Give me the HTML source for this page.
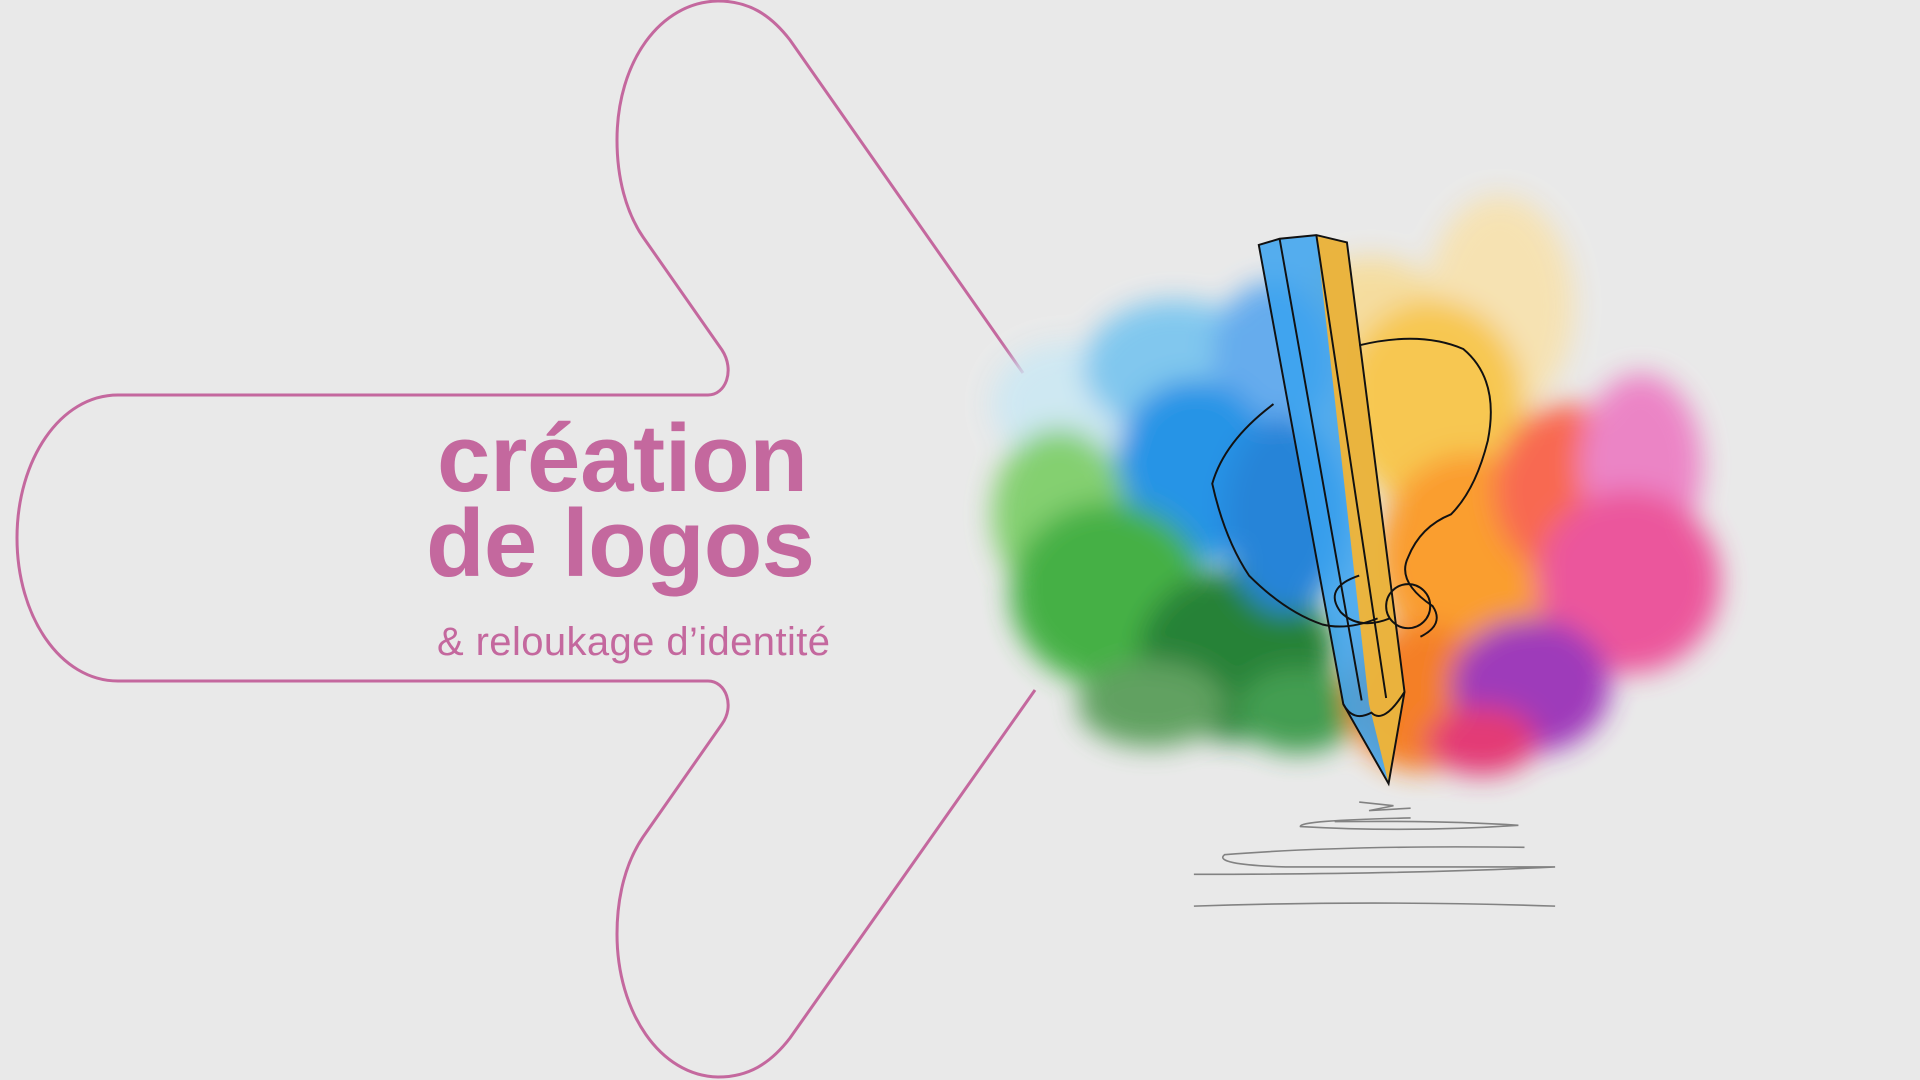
<!DOCTYPE html>
<html><head><meta charset="utf-8"><style>
html,body{margin:0;padding:0;background:#e9e9e9;overflow:hidden}
svg{display:block}
</style></head><body>
<svg width="1920" height="1080" viewBox="0 0 1920 1080" xmlns="http://www.w3.org/2000/svg">
<defs>
<filter id="b" x="-30%" y="-30%" width="160%" height="160%"><feGaussianBlur stdDeviation="11"/></filter>
</defs>
<rect width="1920" height="1080" fill="#e9e9e9"/>
<path d="M1023,373 L790,40 C770,14 748,1 718,1 C660,2 617,62 617,140 C617,178 626,212 643,237 L722,350 C735,370 726,395 708,395 L118,395 C60,395 17,460 17,538 C17,616 60,681 118,681 L708,681 C726,681 735,706 722,724 L643,837 C626,862 617,896 617,934 C617,1012 660,1076 718,1077 C748,1077 770,1064 790,1038 L1035,690" fill="none" stroke="#c4689e" stroke-width="3"/>
<g font-family="'Liberation Sans',sans-serif" fill="#c4689e">
<text x="437" y="491" font-size="96" font-weight="bold" textLength="371">création</text>
<text x="426" y="576" font-size="96" font-weight="bold" textLength="389">de logos</text>
<text x="437" y="655" font-size="40" textLength="393">&amp; reloukage d’identité</text>
</g>
<g transform="scale(1.2245)">
<g filter="url(#b)" opacity="0.95">
<ellipse cx="1225" cy="250" rx="60" ry="90" fill="#f7e2b0"/>
<ellipse cx="1120" cy="260" rx="60" ry="50" fill="#f6dd9c"/>
<ellipse cx="870" cy="330" rx="60" ry="50" fill="#cde8f3"/>
<ellipse cx="960" cy="300" rx="75" ry="55" fill="#7cc6ef"/>
<ellipse cx="1040" cy="290" rx="50" ry="60" fill="#5ea9ee"/>
<ellipse cx="975" cy="385" rx="65" ry="75" fill="#1e90e6"/>
<ellipse cx="865" cy="420" rx="55" ry="70" fill="#7fcf6a"/>
<ellipse cx="905" cy="485" rx="80" ry="75" fill="#3cae3c"/>
<ellipse cx="1010" cy="535" rx="80" ry="70" fill="#1f7d2e"/>
<ellipse cx="940" cy="575" rx="60" ry="35" fill="#5a9e5a"/>
<ellipse cx="1060" cy="580" rx="50" ry="35" fill="#3a9a4a"/>
<ellipse cx="1050" cy="420" rx="50" ry="80" fill="#1a7fd8"/>
<ellipse cx="1170" cy="330" rx="75" ry="85" fill="#f8c64a"/>
<ellipse cx="1200" cy="455" rx="75" ry="85" fill="#fb9a26"/>
<ellipse cx="1160" cy="570" rx="60" ry="60" fill="#f57a1e"/>
<ellipse cx="1280" cy="400" rx="60" ry="70" fill="#f9634a"/>
<ellipse cx="1340" cy="380" rx="50" ry="75" fill="#ec7fc4"/>
<ellipse cx="1330" cy="475" rx="75" ry="75" fill="#ec4f98"/>
<ellipse cx="1250" cy="560" rx="65" ry="55" fill="#9b33b8"/>
<ellipse cx="1210" cy="605" rx="45" ry="28" fill="#e3306f"/>
</g>
<path d="M1028,200 L1045,195 L1075,192 L1100,198 L1147,565 L1134,640 L1097,575 Z" fill="#3aa2ef" opacity="0.85"/>
<path d="M1075,192 L1100,198 L1147,565 L1134,640 L1118,575 Z" fill="#fbb52c" opacity="0.9"/>
<g fill="none" stroke="#111" stroke-width="1.6">
<path d="M1028,200 L1045,195 L1075,192 L1100,198 L1147,565 L1134,640 L1097,575 Z"/>
<path d="M1045,195 L1112,572 M1075,192 L1132,570 M1097,575 Q1105,590 1120,582 Q1130,592 1147,565"/>
<path d="M1110,282 Q1160,270 1195,285 Q1225,310 1215,360 Q1205,400 1185,420 Q1160,430 1150,455 Q1140,475 1170,495 Q1180,510 1160,520"/>
<path d="M1040,330 Q1000,360 990,395 Q1000,440 1020,470 Q1050,500 1080,510 Q1100,515 1125,505"/>
<circle cx="1150" cy="495" r="18"/>
<path d="M1110,470 Q1080,480 1095,500 Q1110,515 1135,505"/>
</g>
<g fill="none" stroke="#777" stroke-width="1.3" opacity="0.9">
<path d="M1110,655 L1138,658 L1118,662 L1152,660"/>
<path d="M1152,668 Q1060,670 1062,675 Q1150,680 1240,674 Q1180,670 1090,671"/>
<path d="M1245,692 Q1100,690 1000,698 Q990,706 1050,708 Q1200,708 1270,708 Q1150,714 975,714"/>
<path d="M975,740 Q1120,735 1270,740"/>
</g>
</g>
</svg>
</body></html>
